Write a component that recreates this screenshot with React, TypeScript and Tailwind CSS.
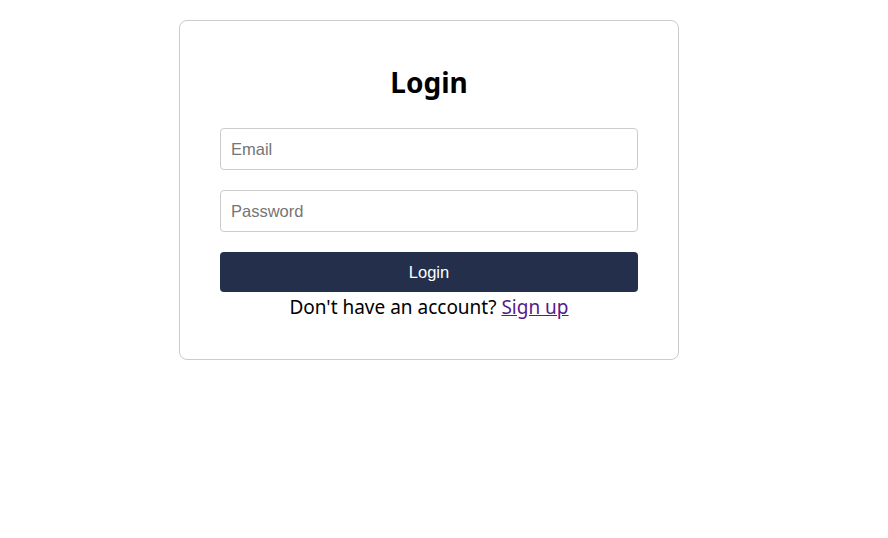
import React from 'react';

const App: React.FC = () => {
  return (
    <div className="min-h-[538px] bg-white pl-[179px] pt-[20px] font-['Noto_Sans',sans-serif] text-black">
      <div className="w-[500px] rounded-lg border border-[#cccccc] px-10 pt-10 pb-10">
        <h2 className="mb-[25px] text-center text-[28px] leading-[42px] font-bold">Login</h2>
        <form className="flex flex-col" onSubmit={(e) => e.preventDefault()}>
          <input
            type="email"
            placeholder="Email"
            className="h-[42px] w-full rounded border border-[#cccccc] px-[10px] font-['Liberation_Sans',Arial,sans-serif] text-[16.5px] placeholder:text-[#757575] outline-none"
          />
          <input
            type="password"
            placeholder="Password"
            className="mt-5 h-[42px] w-full rounded border border-[#cccccc] px-[10px] font-['Liberation_Sans',Arial,sans-serif] text-[16.5px] placeholder:text-[#757575] outline-none"
          />
          <button
            type="submit"
            className="mt-5 h-10 w-full rounded bg-[#232f4b] font-['Liberation_Sans',Arial,sans-serif] text-[16.5px] text-white"
          >
            Login
          </button>
        </form>
        <p className="mt-[3px] text-center text-[19px] leading-[24px]">
          Don't have an account?{' '}
          <a href="#" className="text-[#551a8b] underline">
            Sign up
          </a>
        </p>
      </div>
    </div>
  );
};

export default App;
